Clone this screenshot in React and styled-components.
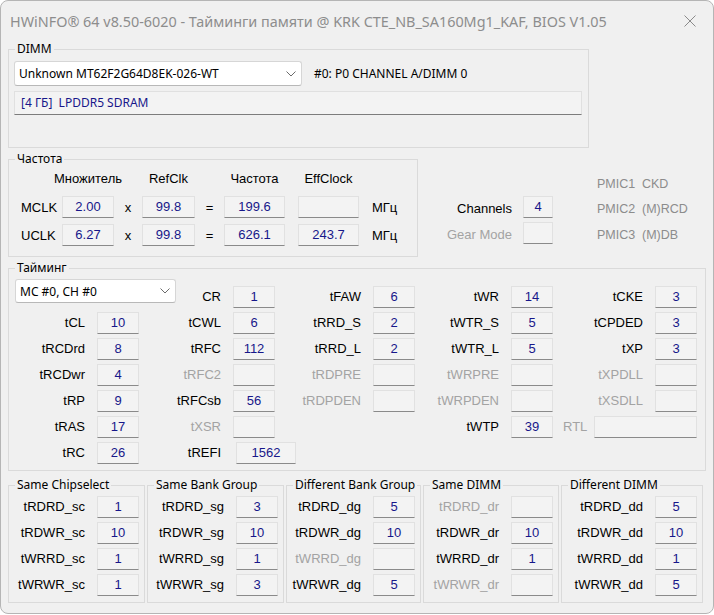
import React from "react"
import styled, { createGlobalStyle } from "styled-components"

const ui = `"Noto Sans", "Open Sans", sans-serif`
const dlg = `"Liberation Sans", Arial, sans-serif`
const navy = "#17178a"
const dim = "#a3a3a3"

const GlobalStyle = createGlobalStyle`
  body{
    margin:0;
    background:#fff;
  }
`

const timingCols = [
  { start: 1, items: [["tCL", "10"], ["tRCDrd", "8"], ["tRCDwr", "4"], ["tRP", "9"], ["tRAS", "17"], ["tRC", "26"]] },
  { start: 0, items: [["CR", "1"], ["tCWL", "6"], ["tRFC", "112"], ["tRFC2", "", true], ["tRFCsb", "56"], ["tXSR", "", true], ["tREFI", "1562", false, true]] },
  { start: 0, items: [["tFAW", "6"], ["tRRD_S", "2"], ["tRRD_L", "2"], ["tRDPRE", "", true], ["tRDPDEN", "", true]] },
  { start: 0, items: [["tWR", "14"], ["tWTR_S", "5"], ["tWTR_L", "5"], ["tWRPRE", "", true], ["tWRPDEN", "", true], ["tWTP", "39"]] },
  { start: 0, items: [["tCKE", "3"], ["tCPDED", "3"], ["tXP", "3"], ["tXPDLL", "", true], ["tXSDLL", "", true]] },
]

const turnGroups = [
  { title: "Same Chipselect", w: 137, rows: [["tRDRD_sc", "1"], ["tRDWR_sc", "10"], ["tWRRD_sc", "1"], ["tWRWR_sc", "1"]] },
  { title: "Same Bank Group", w: 137, rows: [["tRDRD_sg", "3"], ["tRDWR_sg", "10"], ["tWRRD_sg", "1"], ["tWRWR_sg", "3"]] },
  { title: "Different Bank Group", w: 135, rows: [["tRDRD_dg", "5"], ["tRDWR_dg", "10"], ["tWRRD_dg", "", true], ["tWRWR_dg", "5"]] },
  { title: "Same DIMM", w: 136, rows: [["tRDRD_dr", "", true], ["tRDWR_dr", "10"], ["tWRRD_dr", "1"], ["tWRWR_dr", "", true]] },
  { title: "Different DIMM", w: 142, rows: [["tRDRD_dd", "5"], ["tRDWR_dd", "10"], ["tWRRD_dd", "1"], ["tWRWR_dd", "5"]] },
]

const Chevron = () => (
  <svg width="10" height="6" viewBox="0 0 10 6">
    <polyline points="0.5,0.5 5,5 9.5,0.5" fill="none" stroke="#6b6b6b" strokeWidth="1" />
  </svg>
)

const App = () => {
  return (
    <>
      <GlobalStyle />
      <Window>
        <TitleBar>
          <Title>HWiNFO® 64 v8.50-6020 - Тайминги памяти @ KRK CTE_NB_SA160Mg1_KAF, BIOS V1.05</Title>
          <CloseButton>
            <svg width="12" height="12" viewBox="0 0 12 12">
              <path d="M0.5 0.5 L11.5 11.5 M11.5 0.5 L0.5 11.5" stroke="#8a8a8a" strokeWidth="1" />
            </svg>
          </CloseButton>
        </TitleBar>

        <Body>
          <Group $w={581}>
            <Legend>DIMM</Legend>
            <DimmInner>
              <DimmRow>
                <Combo $w={288} $h={25}>
                  Unknown MT62F2G64D8EK-026-WT
                  <Chevron />
                </Combo>
                <SlotText>#0: P0 CHANNEL A/DIMM 0</SlotText>
              </DimmRow>
              <InfoBar>[4 ГБ]&nbsp; LPDDR5 SDRAM</InfoBar>
            </DimmInner>
          </Group>

          <FreqRow>
            <Group $w={410}>
              <Legend>Частота</Legend>
              <FreqGrid>
                <Head $col={2}><span>Множитель</span></Head>
                <Head $col={4}><span>RefClk</span></Head>
                <Head $col={6}><span>Частота</span></Head>
                <Head $col={8}><span>EffClock</span></Head>

                {[["MCLK", "2.00", "99.8", "199.6", ""], ["UCLK", "6.27", "99.8", "626.1", "243.7"]].map(
                  ([name, mult, ref, freq, eff], i) => (
                    <React.Fragment key={name}>
                      <FreqName $row={i + 2}>{name}</FreqName>
                      <Field $w={52} $col={2} $row={i + 2}>{mult}</Field>
                      <Op $col={3} $row={i + 2}>x</Op>
                      <Field $w={53} $col={4} $row={i + 2}>{ref}</Field>
                      <Op $col={5} $row={i + 2}>=</Op>
                      <Field $w={61} $col={6} $row={i + 2}>{freq}</Field>
                      <Field $w={61} $col={8} $row={i + 2}>{eff}</Field>
                      <Op $col={10} $row={i + 2} $left>МГц</Op>
                    </React.Fragment>
                  )
                )}
              </FreqGrid>
            </Group>

            <ExtraGrid>
              <Pmic $col={3} $row={1}>PMIC1</Pmic>
              <Pmic $col={4} $row={1}>CKD</Pmic>
              <ExtraLabel $row={2}>Channels</ExtraLabel>
              <Field $w={30} $col={2} $row={2} $lift>4</Field>
              <Pmic $col={3} $row={2}>PMIC2</Pmic>
              <Pmic $col={4} $row={2}>(M)RCD</Pmic>
              <ExtraLabel $row={3} $dim>Gear Mode</ExtraLabel>
              <Field $w={30} $col={2} $row={3} $lift />
              <Pmic $col={3} $row={3}>PMIC3</Pmic>
              <Pmic $col={4} $row={3}>(M)DB</Pmic>
            </ExtraGrid>
          </FreqRow>

          <TimingGroup $w={698}>
            <Legend>Тайминг</Legend>
            <TimingGrid>
              <Combo $w={161} $h={24} $grid>
                MC #0, CH #0
                <Chevron />
              </Combo>
              {timingCols.map((col, c) =>
                col.items.map(([name, value, off, wide], r) => (
                  <React.Fragment key={name}>
                    <Label $col={c * 2 + 1} $row={col.start + r + 1} $dim={off}>{name}</Label>
                    <Field
                      $w={wide ? 60 : 42}
                      $col={c * 2 + 2}
                      $row={col.start + r + 1}
                      $span={wide ? 2 : 1}
                      $shift={wide ? 3 : 0}
                    >
                      {value}
                    </Field>
                  </React.Fragment>
                ))
              )}
              <RtlCell>
                <RtlLabel>RTL</RtlLabel>
                <Field $w={103} />
              </RtlCell>
            </TimingGrid>
          </TimingGroup>

          <TurnRow>
            {turnGroups.map((g) => (
              <Group $w={g.w} key={g.title}>
                <Legend>{g.title}</Legend>
                <TurnList>
                  {g.rows.map(([name, value, off]) => (
                    <TurnItem key={name}>
                      <TurnLabel $dim={off}>{name}</TurnLabel>
                      <Field $w={42}>{value}</Field>
                    </TurnItem>
                  ))}
                </TurnList>
              </Group>
            ))}
          </TurnRow>
        </Body>
      </Window>
    </>
  )
}
export default App

const Window = styled.div`
  width:714px;
  height:614px;
  box-sizing:border-box;
  border:1px solid #b5b5b5;
  border-radius:8px;
  background:#f0f0f0;
  overflow:hidden;
  font-family:${dlg};
`
const TitleBar = styled.div`
  display:flex;
  align-items:center;
  height:40px;
  padding-left:9px;
`
const Title = styled.div`
  flex:1;
  font-family:${ui};
  font-size:14.4px;
  color:#8d8d8d;
  white-space:nowrap;
`
const CloseButton = styled.div`
  width:46px;
  height:38px;
  display:flex;
  align-items:center;
  justify-content:center;
`
const Body = styled.div`
  display:flex;
  flex-flow:column;
  align-items:flex-start;
  padding-left:7px;
`
const Group = styled.fieldset`
  margin:0;
  padding:0;
  min-width:0;
  width:${(p) => p.$w}px;
  box-sizing:border-box;
  border:1px solid #dadada;
`
const Legend = styled.legend`
  margin-left:6px;
  padding:0 2px;
  font-family:${ui};
  font-size:12px;
  line-height:16px;
  color:#000;
`
const DimmInner = styled.div`
  padding:4px 0 32px 5px;
`
const DimmRow = styled.div`
  display:flex;
  align-items:center;
`
const Combo = styled.div`
  display:flex;
  align-items:center;
  justify-content:space-between;
  width:${(p) => p.$w}px;
  height:${(p) => p.$h}px;
  box-sizing:border-box;
  padding:0 5px 0 4px;
  background:#fff;
  border:1px solid #d6d6d6;
  border-bottom-color:#b8b8b8;
  border-radius:3px;
  font-family:${ui};
  font-size:12px;
  color:#000;
  ${(p) => p.$grid && `
    grid-column:1 / span 4;
    grid-row:1;
    align-self:start;
    justify-self:start;
    margin:-7px 0 0 1px;
  `}
`
const SlotText = styled.div`
  margin-left:12px;
  font-family:${ui};
  font-size:12px;
`
const InfoBar = styled.div`
  margin-top:5px;
  width:568px;
  height:24px;
  box-sizing:border-box;
  padding-left:6px;
  background:#f3f3f3;
  border:1px solid #e0e0e0;
  border-bottom-color:#7c7c7c;
  font-family:${ui};
  font-size:12px;
  line-height:22px;
  color:${navy};
`
const Field = styled.div`
  width:${(p) => p.$w}px;
  height:22px;
  box-sizing:border-box;
  background:#f3f3f3;
  border:1px solid #e1e1e1;
  border-bottom-color:#8a8a8a;
  font-family:${dlg};
  font-size:13px;
  line-height:19px;
  text-align:center;
  color:${navy};
  ${(p) => p.$col && `grid-column:${p.$col} / span ${p.$span || 1};`}
  ${(p) => p.$row && `grid-row:${p.$row};`}
  align-self:start;
  justify-self:start;
  margin-left:${(p) => p.$shift || 0}px;
  margin-top:${(p) => (p.$lift ? -2 : 0)}px;
  ${(p) => !p.$col && `flex:none;`}
`
const FreqRow = styled.div`
  display:flex;
  align-items:flex-start;
  margin-top:3px;
`
const FreqGrid = styled.div`
  display:grid;
  grid-template-columns:53px 52px 28px 53px 29px 61px 13px 61px 13px auto;
  grid-template-rows:25px 28px 22px;
  margin:4px 0 10px 0;
`
const Head = styled.div`
  grid-column:${(p) => p.$col};
  grid-row:1;
  min-width:0;
  display:flex;
  justify-content:center;
  white-space:nowrap;
  font-size:13px;
  line-height:16px;
`
const FreqName = styled.div`
  grid-column:1;
  grid-row:${(p) => p.$row};
  padding-left:12px;
  font-size:13px;
  line-height:24px;
`
const Op = styled.div`
  grid-column:${(p) => p.$col};
  grid-row:${(p) => p.$row};
  text-align:${(p) => (p.$left ? "left" : "center")};
  white-space:nowrap;
  font-size:13px;
  line-height:24px;
`
const ExtraGrid = styled.div`
  display:grid;
  grid-template-columns:104px 30px 44px 45px auto;
  grid-template-rows:25px 26px 26px;
  margin-top:22px;
  margin-left:1px;
`
const ExtraLabel = styled.div`
  grid-column:1;
  grid-row:${(p) => p.$row};
  padding-right:11px;
  text-align:right;
  font-size:13px;
  line-height:22px;
  color:${(p) => (p.$dim ? dim : "#000")};
  white-space:nowrap;
`
const Pmic = styled.div`
  grid-column:${(p) => (p.$col === 3 ? "4" : "5")};
  grid-row:${(p) => p.$row};
  font-size:12.5px;
  line-height:22px;
  color:#8c8c8c;
  white-space:nowrap;
`
const TimingGroup = styled(Group)`
  margin-top:3px;
`
const TimingGrid = styled.div`
  display:grid;
  grid-template-columns:83px 42px 94px 42px 98px 42px 96px 42px 102px 42px;
  grid-template-rows:repeat(7, 26px);
  margin:10px 0 2px 5px;
`
const Label = styled.div`
  grid-column:${(p) => p.$col};
  grid-row:${(p) => p.$row};
  padding-right:12px;
  text-align:right;
  font-size:13px;
  line-height:22px;
  white-space:nowrap;
  color:${(p) => (p.$dim ? dim : "#000")};
`
const RtlCell = styled.div`
  grid-column:9 / span 2;
  grid-row:6;
  display:flex;
  align-items:flex-start;
  justify-content:space-between;
  padding-left:10px;
`
const RtlLabel = styled.span`
  font-size:13px;
  line-height:22px;
  color:${dim};
`
const TurnRow = styled.div`
  display:flex;
  gap:2px;
  margin-top:6px;
`
const TurnList = styled.div`
  display:flex;
  flex-flow:column;
  padding:3px 5px 2px 0;
`
const TurnItem = styled.div`
  display:flex;
  justify-content:flex-end;
  align-items:flex-start;
  height:26px;
`
const TurnLabel = styled.span`
  padding-right:12px;
  font-size:13px;
  line-height:22px;
  white-space:nowrap;
  color:${(p) => (p.$dim ? dim : "#000")};
`
